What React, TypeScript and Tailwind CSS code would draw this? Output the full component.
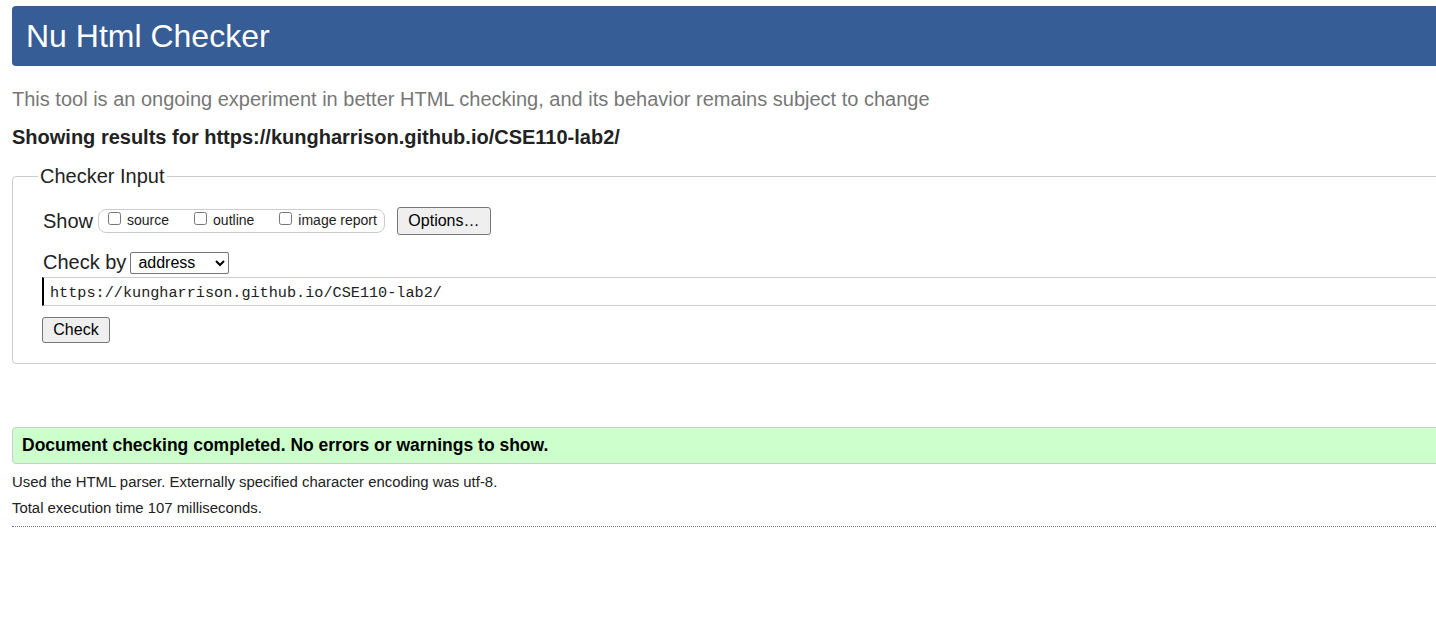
import React from "react";

export default function App() {
  return (
    <div className="w-[1436px] h-[633px] overflow-hidden bg-white text-[#222] font-['Liberation_Sans',Arial,sans-serif]">
      <div className="w-[1500px] pl-[12px] pt-[6px]">
        <div className="h-[60px] bg-[#365d95] rounded-[4px] flex items-center pl-[14px] text-white text-[32px] leading-none">
          Nu Html Checker
        </div>
        <p className="mt-[22px] text-[20px] leading-[23px] text-[#777]">
          This tool is an ongoing experiment in better HTML checking, and its behavior remains subject to change
        </p>
        <p className="mt-[15px] text-[20px] leading-[23px] font-bold text-[#222]">
          Showing results for https://kungharrison.github.io/CSE110-lab2/
        </p>
        <fieldset className="mt-[16px] border border-[#ccc] rounded-[4px] pl-[29px] pt-[19px] pb-[20px]">
          <legend className="-ml-[4px] px-[2px] text-[20px] leading-[23px]">Checker Input</legend>
          <div className="flex items-center h-[28px]">
            <span className="ml-[1px] text-[20px] leading-[23px]">Show</span>
            <div className="ml-[5px] h-[24px] border border-[#ccc] rounded-[8px] pl-[9px] pr-[7px] flex items-baseline gap-[25px] text-[14px] leading-[16px] pt-[2px]">
              <label className="flex items-baseline">
                <input type="checkbox" className="w-[13px] h-[13px]" />
                <span className="ml-[6px]">source</span>
              </label>
              <label className="flex items-baseline">
                <input type="checkbox" className="w-[13px] h-[13px]" />
                <span className="ml-[6px]">outline</span>
              </label>
              <label className="flex items-baseline">
                <input type="checkbox" className="w-[13px] h-[13px]" />
                <span className="ml-[6px]">image report</span>
              </label>
            </div>
            <button className="ml-[12px] w-[94px] h-[28px] border border-[#767676] bg-[#efefef] rounded-[3px] text-[16px] text-black">
              Options…
            </button>
          </div>
          <div className="mt-[16px] flex items-center h-[23px]">
            <span className="ml-[1px] text-[20px] leading-[23px]">Check by</span>
            <select className="ml-[4px] w-[99px] h-[22px] border border-[#767676] rounded-[2px] bg-white text-[16px] text-black pl-[3px]">
              <option>address</option>
            </select>
          </div>
          <div className="mt-[3px] h-[29px] border border-[#ccc] border-l-2 border-l-black flex items-center pl-[6px] pt-[3px] font-['Liberation_Mono',monospace] text-[15.2px]">
            https://kungharrison.github.io/CSE110-lab2/
          </div>
          <button className="mt-[11px] w-[68px] h-[26px] border border-[#767676] bg-[#efefef] rounded-[3px] text-[16px] text-black">
            Check
          </button>
        </fieldset>
        <div className="mt-[63px] h-[37px] border border-[#ccc] rounded-[4px] bg-[#ccffcc] flex items-center pl-[9px] text-[17.5px] font-bold text-black">
          Document checking completed. No errors or warnings to show.
        </div>
        <p className="mt-[10px] text-[14.9px] leading-[17px]">
          Used the HTML parser. Externally specified character encoding was utf-8.
        </p>
        <p className="mt-[9px] text-[14.9px] leading-[17px]">Total execution time 107 milliseconds.</p>
        <div className="mt-[9px] border-t border-dotted border-[#777]" />
      </div>
    </div>
  );
}
